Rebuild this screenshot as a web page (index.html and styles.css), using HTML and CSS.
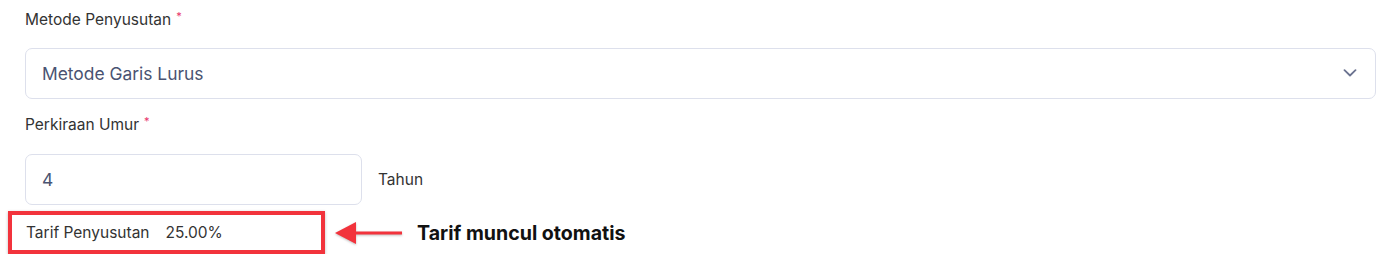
FILE: index.html
```html
<!DOCTYPE html>
<html>
<head>
<meta charset="utf-8">
<link rel="stylesheet" href="styles.css">
</head>
<body>
<div class="form">
  <div class="label">Metode Penyusutan<span class="req">*</span></div>
  <div class="select">
    <span class="value">Metode Garis Lurus</span>
    <svg class="chev" width="14" height="8" viewBox="0 0 14 8"><path d="M1.5 1.2 L7 6.5 L12.5 1.2" fill="none" stroke="#6b7390" stroke-width="1.8" stroke-linecap="round" stroke-linejoin="round"/></svg>
  </div>
  <div class="label label2">Perkiraan Umur<span class="req">*</span></div>
  <div class="inrow">
    <div class="input"><span class="value">4</span></div>
    <span class="unit">Tahun</span>
  </div>
  <div class="annot">
    <div class="redbox"><span>Tarif Penyusutan</span><span class="rate">25.00%</span></div>
    <svg class="arrow" width="70" height="26" viewBox="0 0 70 26"><path d="M18 11.5 H67 V14.5 H18 Z" fill="#f2333c"/><path d="M0 13 L21 2 L21 24 Z" fill="#f2333c"/></svg>
    <span class="note">Tarif muncul otomatis</span>
  </div>
</div>
</body>
</html>
```
FILE: styles.css
```css
html, body { margin: 0; padding: 0; background: #fff; }
body { font-family: Inter, "Noto Sans", sans-serif; }
.form { padding: 10px 11px 0 25px; display: flex; flex-direction: column; }
.label { font-size: 15.5px; line-height: 20px; color: #333; height: 20px; }
.req { color: #e8336b; font-size: 11px; vertical-align: top; position: relative; top: -4px; margin-left: 5px; }
.select { margin-top: 18px; height: 49px; border: 1px solid #dde0ec; border-radius: 7px; display: flex; align-items: center; justify-content: space-between; padding: 0 18px 0 16px; }
.value { font-size: 17.4px; color: #4a5372; }
.chev { margin-top: -2px; }
.label2 { margin-top: 16px; }
.inrow { margin-top: 19px; display: flex; align-items: center; gap: 16px; }
.input { width: 319px; height: 49px; border: 1px solid #dde0ec; border-radius: 7px; display: flex; align-items: center; padding-left: 16px; }
.unit { font-size: 15.5px; color: #333; }
.annot { margin: 6px 0 0 -17px; display: flex; align-items: center; }
.redbox { box-sizing: border-box; width: 317px; height: 43px; border: 4px solid #f2333c; box-shadow: 0 1px 3px rgba(0,0,0,0.25); display: flex; align-items: center; padding-left: 14px; font-size: 15.5px; color: #333; gap: 16px; }
.arrow { margin-left: 10px; filter: drop-shadow(0 1px 1px rgba(0,0,0,0.25)); }
.note { margin-left: 12px; font-size: 19.6px; font-weight: 700; color: #111; }
```
